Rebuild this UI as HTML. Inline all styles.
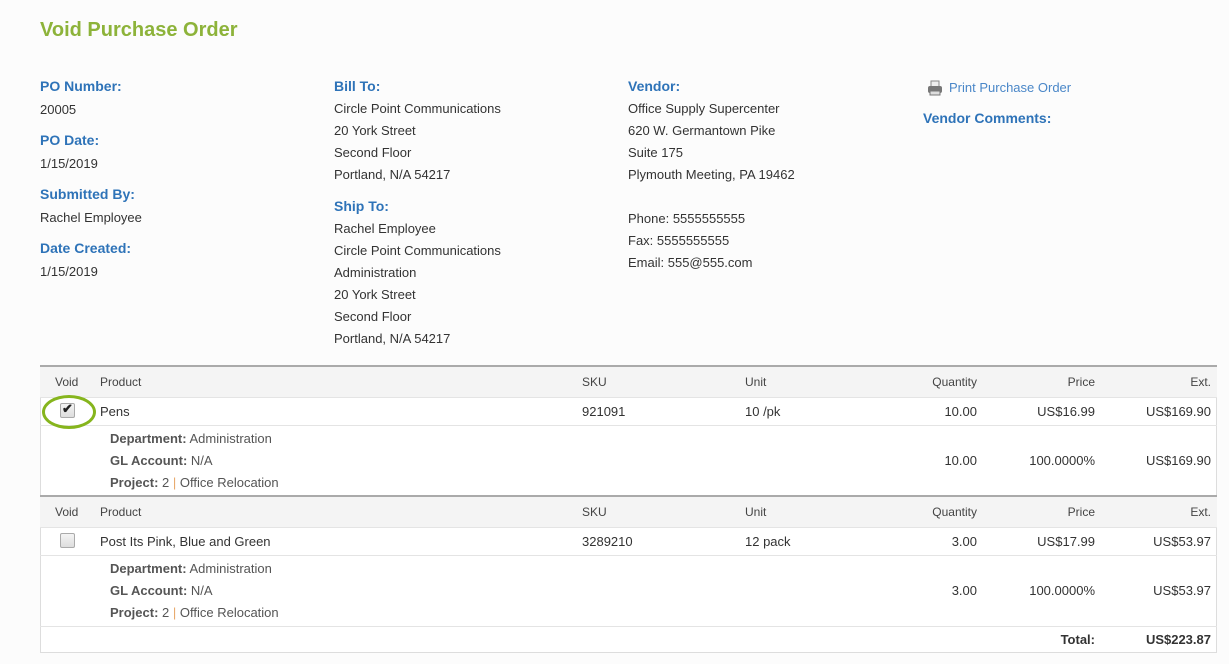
<!DOCTYPE html>
<html><head><style>
body{margin:0;width:1229px;height:664px;background:#fcfcfc;font-family:"Liberation Sans",sans-serif;font-size:13px;color:#333;position:relative;overflow:hidden}
.a{position:absolute;white-space:nowrap}
h1{position:absolute;left:40px;top:19px;margin:0;font-size:20px;font-weight:bold;color:#8db33a}
.l{color:#2e73b8;font-weight:bold;font-size:14px}
.t{position:absolute;left:40px;width:1175px;border-left:1px solid #ddd;border-right:1px solid #ddd;background:#fff}
.hd{position:absolute;left:40px;width:1177px;height:30px;background:#f4f4f4;border-top:2px solid #aaa;border-bottom:1px solid #e4e4e4}
.h{font-size:12px;color:#444}
.r{text-align:right}
.line{position:absolute;left:40px;width:1177px;height:1px;background:#e4e4e4}
.cb{position:absolute;width:13px;height:13px;border:1px solid #aaa;border-radius:2px;background:linear-gradient(#f4f4f4,#ddd)}
b.k{color:#555}
</style></head><body>
<h1>Void Purchase Order</h1>
<div class="a l" style="left:40px;top:78px">PO Number:</div>
<div class="a" style="left:40px;top:102px">20005</div>
<div class="a l" style="left:40px;top:132px">PO Date:</div>
<div class="a" style="left:40px;top:156px">1/15/2019</div>
<div class="a l" style="left:40px;top:186px">Submitted By:</div>
<div class="a" style="left:40px;top:210px">Rachel Employee</div>
<div class="a l" style="left:40px;top:240px">Date Created:</div>
<div class="a" style="left:40px;top:264px">1/15/2019</div>

<div class="a l" style="left:334px;top:78px">Bill To:</div>
<div class="a" style="left:334px;top:98px;line-height:22px">Circle Point Communications<br>20 York Street<br>Second Floor<br>Portland, N/A 54217</div>
<div class="a l" style="left:334px;top:198px">Ship To:</div>
<div class="a" style="left:334px;top:218px;line-height:22px">Rachel Employee<br>Circle Point Communications<br>Administration<br>20 York Street<br>Second Floor<br>Portland, N/A 54217</div>

<div class="a l" style="left:628px;top:78px">Vendor:</div>
<div class="a" style="left:628px;top:98px;line-height:22px">Office Supply Supercenter<br>620 W. Germantown Pike<br>Suite 175<br>Plymouth Meeting, PA 19462<br><br>Phone: 5555555555<br>Fax: 5555555555<br>Email: 555@555.com</div>

<svg class="a" style="left:926px;top:79px" width="18" height="18" viewBox="0 0 18 18"><rect x="5" y="2" width="8" height="6" fill="#eee" stroke="#888"/><rect x="2" y="7" width="14" height="7" rx="2" fill="#777"/><rect x="4" y="12" width="10" height="4" fill="#ddd" stroke="#777"/></svg>
<div class="a" style="left:949px;top:80px;color:#4a87c8">Print Purchase Order</div>
<div class="a l" style="left:923px;top:110px">Vendor Comments:</div>

<div class="t" style="top:366px;height:286px;border-bottom:1px solid #ddd"></div>
<div class="hd" style="top:365px"></div>
<div class="hd" style="top:495px"></div>
<div class="line" style="top:425px"></div>
<div class="line" style="top:555px"></div>
<div class="line" style="top:626px"></div>

<div class="a h" style="left:55px;top:375px">Void</div><div class="a h" style="left:100px;top:375px">Product</div><div class="a h" style="left:582px;top:375px">SKU</div><div class="a h" style="left:745px;top:375px">Unit</div>
<div class="a h r" style="right:252px;top:375px">Quantity</div><div class="a h r" style="right:134px;top:375px">Price</div><div class="a h r" style="right:18px;top:375px">Ext.</div>

<div class="cb" style="left:60px;top:403px"></div><div class="a" style="left:62px;top:401px;font-size:13px;color:#222;font-weight:bold">✔</div>
<div class="a" style="left:42px;top:395px;width:48px;height:28px;border:3px solid #86b51d;border-radius:50%"></div>
<div class="a" style="left:100px;top:404px">Pens</div><div class="a" style="left:582px;top:404px">921091</div><div class="a" style="left:745px;top:404px">10 /pk</div>
<div class="a r" style="right:252px;top:404px">10.00</div><div class="a r" style="right:134px;top:404px">US$16.99</div><div class="a r" style="right:18px;top:404px">US$169.90</div>
<div class="a" style="left:110px;top:428px;line-height:22px;color:#555"><b class="k">Department:</b> Administration<br><b class="k">GL Account:</b> N/A<br><b class="k">Project:</b> 2 <span style="color:#e8a86a">|</span> Office Relocation</div>
<div class="a r" style="right:252px;top:453px">10.00</div><div class="a r" style="right:134px;top:453px">100.0000%</div><div class="a r" style="right:18px;top:453px">US$169.90</div>

<div class="a h" style="left:55px;top:505px">Void</div><div class="a h" style="left:100px;top:505px">Product</div><div class="a h" style="left:582px;top:505px">SKU</div><div class="a h" style="left:745px;top:505px">Unit</div>
<div class="a h r" style="right:252px;top:505px">Quantity</div><div class="a h r" style="right:134px;top:505px">Price</div><div class="a h r" style="right:18px;top:505px">Ext.</div>

<div class="cb" style="left:60px;top:533px"></div>
<div class="a" style="left:100px;top:534px">Post Its Pink, Blue and Green</div><div class="a" style="left:582px;top:534px">3289210</div><div class="a" style="left:745px;top:534px">12 pack</div>
<div class="a r" style="right:252px;top:534px">3.00</div><div class="a r" style="right:134px;top:534px">US$17.99</div><div class="a r" style="right:18px;top:534px">US$53.97</div>
<div class="a" style="left:110px;top:558px;line-height:22px;color:#555"><b class="k">Department:</b> Administration<br><b class="k">GL Account:</b> N/A<br><b class="k">Project:</b> 2 <span style="color:#e8a86a">|</span> Office Relocation</div>
<div class="a r" style="right:252px;top:583px">3.00</div><div class="a r" style="right:134px;top:583px">100.0000%</div><div class="a r" style="right:18px;top:583px">US$53.97</div>

<div class="a r" style="right:134px;top:632px;font-weight:bold">Total:</div><div class="a r" style="right:18px;top:632px;font-weight:bold">US$223.87</div>
</body></html>
